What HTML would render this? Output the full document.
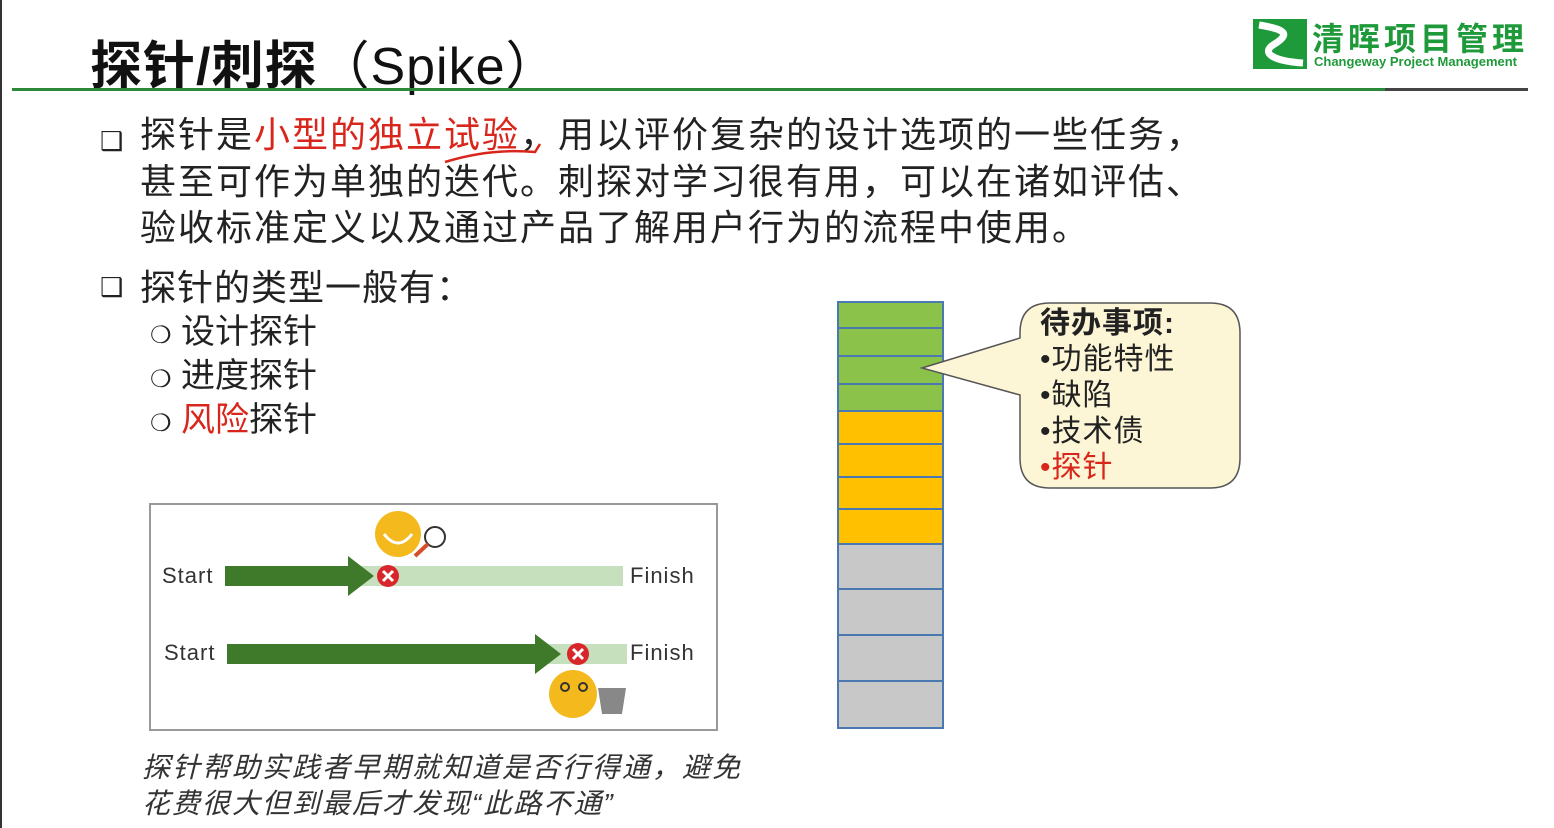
<!DOCTYPE html><html><head><meta charset="utf-8"><style>
body{margin:0;width:1554px;height:828px;background:#fff;position:relative;overflow:hidden;font-family:"Liberation Sans","Noto Sans CJK SC",sans-serif;color:#222}
.a{position:absolute;white-space:nowrap}
.r{color:#d9261c}
</style></head><body>
<div class="a" style="left:0;top:0;width:2px;height:828px;background:#333"></div>
<div class="a" style="left:90px;top:24px;font-size:52px;font-weight:bold;color:#111;letter-spacing:1px">探针/刺探<span style="font-weight:normal">（Spike）</span></div>
<div class="a" style="left:12px;top:88px;width:1373px;height:3px;background:#2a8a3a"></div>
<div class="a" style="left:1385px;top:88px;width:143px;height:3px;background:#444"></div>
<svg class="a" style="left:1253px;top:19px" width="54" height="50"><rect width="54" height="50" fill="#1f9a3a"/><path d="M6 6 C30 10 40 14 20 26 C8 34 20 42 50 44" stroke="#fff" stroke-width="7" fill="none"/></svg>
<div class="a" style="left:1312px;top:14px;font-size:32px;font-weight:bold;color:#1f9a3a;letter-spacing:4px">清晖项目管理</div>
<div class="a" style="left:1314px;top:54px;font-size:13px;font-weight:bold;color:#1f9a3a">Changeway Project Management</div>

<div class="a" style="left:100px;top:126px;font-size:26px">❑</div>
<div class="a" style="left:140px;top:112px;font-size:36px;line-height:46.5px;letter-spacing:2px">探针是<span class="r">小型的独立试验</span>，用以评价复杂的设计选项的一些任务，<br>甚至可作为单独的迭代。刺探对学习很有用，可以在诸如评估、<br>验收标准定义以及通过产品了解用户行为的流程中使用。</div>
<svg class="a" style="left:440px;top:140px" width="110" height="30"><path d="M5 22 Q50 8 95 12 L100 4" stroke="#d9261c" stroke-width="2.5" fill="none"/></svg>
<div class="a" style="left:100px;top:272px;font-size:26px">❑</div>
<div class="a" style="left:140px;top:259px;font-size:36px;letter-spacing:1px">探针的类型一般有：</div>
<div class="a" style="left:150px;top:312px;font-size:34px;line-height:41px"><span style="font-size:24px">❍</span> 设计探针<br><span style="font-size:24px">❍</span> 进度探针<br><span style="font-size:24px">❍</span> <span class="r">风险</span>探针</div>

<div class="a" style="left:149px;top:503px;width:565px;height:224px;border:2px solid #999"></div>
<div class="a" style="left:162px;top:563px;font-size:22px;color:#333;letter-spacing:1px">Start</div>
<div class="a" style="left:630px;top:563px;font-size:22px;color:#333;letter-spacing:1px">Finish</div>
<div class="a" style="left:164px;top:640px;font-size:22px;color:#333;letter-spacing:1px">Start</div>
<div class="a" style="left:630px;top:640px;font-size:22px;color:#333;letter-spacing:1px">Finish</div>
<svg class="a" style="left:150px;top:504px" width="565" height="224">
<rect x="198" y="62" width="275" height="20" fill="#c6e0bd"/>
<path d="M75 62H198V52L224 72L198 92V82H75Z" fill="#3f7a2b"/>
<circle cx="238" cy="72" r="11" fill="#d8262a"/><path d="M233 67L243 77M243 67L233 77" stroke="#fff" stroke-width="3"/>
<rect x="385" y="140" width="92" height="20" fill="#c6e0bd"/>
<path d="M77 140H385V130L411 150L385 170V160H77Z" fill="#3f7a2b"/>
<circle cx="428" cy="150" r="11" fill="#d8262a"/><path d="M423 145L433 155M433 145L423 155" stroke="#fff" stroke-width="3"/>
<circle cx="248" cy="30" r="23" fill="#f4b91c"/><path d="M234 30Q248 48 262 30" stroke="#fff" stroke-width="3" fill="none"/><circle cx="285" cy="33" r="10" fill="#fff" stroke="#333" stroke-width="2"/><path d="M278 40L265 52" stroke="#d4502a" stroke-width="4"/>
<circle cx="423" cy="190" r="24" fill="#f4b91c"/><circle cx="415" cy="183" r="4" fill="none" stroke="#333" stroke-width="2"/><circle cx="433" cy="183" r="4" fill="none" stroke="#333" stroke-width="2"/>
<path d="M448 184H476L472 210H452Z" fill="#888"/>
</svg>
<div class="a" style="left:142px;top:750px;font-size:28px;font-style:italic;line-height:36px;color:#333;letter-spacing:2px">探针帮助实践者早期就知道是否行得通，避免<br>花费很大但到最后才发现“此路不通”</div>

<svg class="a" style="left:836px;top:300px" width="420" height="432">
<g stroke="#4a78b0" stroke-width="2">
<rect x="2" y="2" width="105" height="26" fill="#8bc34a"/><rect x="2" y="28" width="105" height="28" fill="#8bc34a"/><rect x="2" y="56" width="105" height="28" fill="#8bc34a"/><rect x="2" y="84" width="105" height="27" fill="#8bc34a"/>
<rect x="2" y="111" width="105" height="33" fill="#ffc000"/><rect x="2" y="144" width="105" height="33" fill="#ffc000"/><rect x="2" y="177" width="105" height="32" fill="#ffc000"/><rect x="2" y="209" width="105" height="35" fill="#ffc000"/>
<rect x="2" y="244" width="105" height="45" fill="#c8c8c8"/><rect x="2" y="289" width="105" height="46" fill="#c8c8c8"/><rect x="2" y="335" width="105" height="46" fill="#c8c8c8"/><rect x="2" y="381" width="105" height="47" fill="#c8c8c8"/>
</g>
<path d="M214 3H374Q404 3 404 33V158Q404 188 374 188H214Q184 188 184 158V95L86 68L184 38V33Q184 3 214 3Z" fill="#fdf6d6" stroke="#555" stroke-width="1.5"/>
</svg>
<div class="a" style="left:1040px;top:306px;font-size:30px;line-height:36px;letter-spacing:1px"><b>待办事项:</b><br>•功能特性<br>•缺陷<br>•技术债<br><span class="r">•探针</span></div>
</body></html>
